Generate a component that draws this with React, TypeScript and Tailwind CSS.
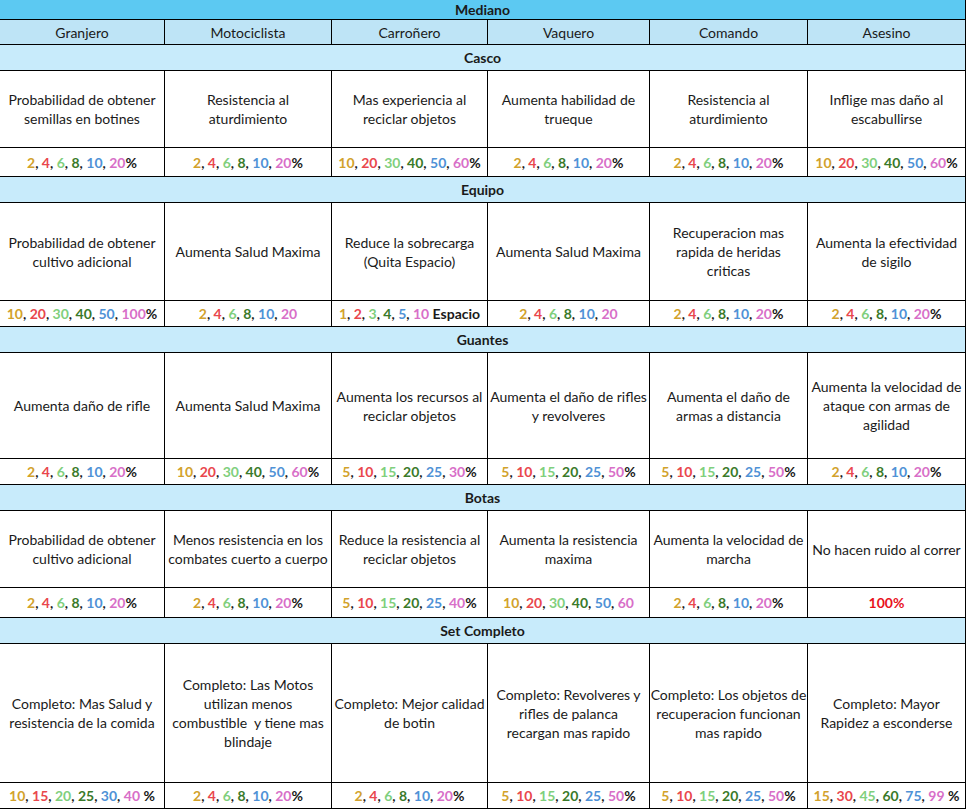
import React from "react";

const COLS = ["Granjero", "Motociclista", "Carroñero", "Vaquero", "Comando", "Asesino"];
const COLORS = [
  "text-[#d2a22c]",
  "text-[#e9474d]",
  "text-[#80cf7d]",
  "text-[#3a7a2a]",
  "text-[#4f92d6]",
  "text-[#d86fc8]",
];
const GRID = "grid grid-cols-[165px_167px_156px_162px_158px_158px]";

type Val = { n?: number[]; s?: string; red?: string };
type Section = { title: string; dh: string; vh: string; desc: string[][]; vals: Val[] };

const A = [2, 4, 6, 8, 10, 20];
const B = [10, 20, 30, 40, 50, 60];
const F = [5, 10, 15, 20, 25, 50];

const SECTIONS: Section[] = [
  {
    title: "Casco",
    dh: "h-[77px]",
    vh: "h-[29px]",
    desc: [
      ["Probabilidad de obtener", "semillas en botines"],
      ["Resistencia al", "aturdimiento"],
      ["Mas experiencia al", "reciclar objetos"],
      ["Aumenta habilidad de", "trueque"],
      ["Resistencia al", "aturdimiento"],
      ["Inflige mas daño al", "escabullirse"],
    ],
    vals: [
      { n: A, s: "%" },
      { n: A, s: "%" },
      { n: B, s: "%" },
      { n: A, s: "%" },
      { n: A, s: "%" },
      { n: B, s: "%" },
    ],
  },
  {
    title: "Equipo",
    dh: "h-[98px]",
    vh: "h-[26px]",
    desc: [
      ["Probabilidad de obtener", "cultivo adicional"],
      ["Aumenta Salud Maxima"],
      ["Reduce la sobrecarga", "(Quita Espacio)"],
      ["Aumenta Salud Maxima"],
      ["Recuperacion mas", "rapida de heridas", "criticas"],
      ["Aumenta la efectividad", "de sigilo"],
    ],
    vals: [
      { n: [10, 20, 30, 40, 50, 100], s: "%" },
      { n: A, s: "" },
      { n: [1, 2, 3, 4, 5, 10], s: " Espacio" },
      { n: A, s: "" },
      { n: A, s: "%" },
      { n: A, s: "%" },
    ],
  },
  {
    title: "Guantes",
    dh: "h-[106px]",
    vh: "h-[26px]",
    desc: [
      ["Aumenta daño de rifle"],
      ["Aumenta Salud Maxima"],
      ["Aumenta los recursos al", "reciclar objetos"],
      ["Aumenta el daño de rifles", "y revolveres"],
      ["Aumenta el daño de", "armas a distancia"],
      ["Aumenta la velocidad de", "ataque con armas de", "agilidad"],
    ],
    vals: [
      { n: A, s: "%" },
      { n: B, s: "%" },
      { n: [5, 10, 15, 20, 25, 30], s: "%" },
      { n: F, s: "%" },
      { n: F, s: "%" },
      { n: A, s: "%" },
    ],
  },
  {
    title: "Botas",
    dh: "h-[77px]",
    vh: "h-[30px]",
    desc: [
      ["Probabilidad de obtener", "cultivo adicional"],
      ["Menos resistencia en los", "combates cuerto a cuerpo"],
      ["Reduce la resistencia al", "reciclar objetos"],
      ["Aumenta la resistencia", "maxima"],
      ["Aumenta la velocidad de", "marcha"],
      ["No hacen ruido al correr"],
    ],
    vals: [
      { n: A, s: "%" },
      { n: A, s: "%" },
      { n: [5, 10, 15, 20, 25, 40], s: "%" },
      { n: B, s: "" },
      { n: A, s: "%" },
      { red: "100%" },
    ],
  },
  {
    title: "Set Completo",
    dh: "h-[139px]",
    vh: "h-[26px]",
    desc: [
      ["Completo: Mas Salud y", "resistencia de la comida"],
      ["Completo: Las Motos", "utilizan menos", "combustible\u00a0 y tiene mas", "blindaje"],
      ["Completo: Mejor calidad", "de botin"],
      ["Completo: Revolveres y", "rifles de palanca", "recargan mas rapido"],
      ["Completo: Los objetos de", "recuperacion funcionan", "mas rapido"],
      ["Completo: Mayor", "Rapidez a esconderse"],
    ],
    vals: [
      { n: [10, 15, 20, 25, 30, 40], s: " %" },
      { n: A, s: "%" },
      { n: A, s: "%" },
      { n: F, s: "%" },
      { n: F, s: "%" },
      { n: [15, 30, 45, 60, 75, 99], s: " %" },
    ],
  },
];

function Values({ v }: { v: Val }) {
  if (v.red) return <span className="text-[#e8121c]">{v.red}</span>;
  const n = v.n || [];
  return (
    <span className="whitespace-nowrap">
      {n.map((x, i) => (
        <React.Fragment key={i}>
          <span className={COLORS[i]}>{x}</span>
          {i < n.length - 1 ? <span>, </span> : null}
        </React.Fragment>
      ))}
      <span className="whitespace-pre">{v.s}</span>
    </span>
  );
}

export default function App() {
  return (
    <div
      className="w-[967px] h-[811px] bg-white text-[#1a1a1a] text-[14px] leading-[19px]"
      style={{ fontFamily: "Lato, 'Noto Sans', sans-serif" }}
    >
      <div className="w-[966px]">
        <div className="h-[20px] bg-[#5cc9f2] border-b border-r border-black flex items-center justify-center font-bold">
          Mediano
        </div>
        <div className={`${GRID} h-[25px] bg-[#bee4f6]`}>
          {COLS.map((c) => (
            <div key={c} className="border-r border-b border-black flex items-center justify-center">
              {c}
            </div>
          ))}
        </div>
        {SECTIONS.map((sec) => (
          <div key={sec.title}>
            <div className="h-[26px] bg-[#c8ebfb] border-b border-r border-black flex items-center justify-center font-bold">
              {sec.title}
            </div>
            <div className={`${GRID} ${sec.dh}`}>
              {sec.desc.map((lines, i) => (
                <div
                  key={i}
                  className="border-r border-b border-black flex flex-col items-center justify-center text-center"
                >
                  {lines.map((l, j) => (
                    <div key={j} className="whitespace-nowrap">
                      {l}
                    </div>
                  ))}
                </div>
              ))}
            </div>
            <div className={`${GRID} ${sec.vh}`}>
              {sec.vals.map((v, i) => (
                <div
                  key={i}
                  className="border-r border-b border-black flex items-center justify-center font-bold"
                >
                  <Values v={v} />
                </div>
              ))}
            </div>
          </div>
        ))}
      </div>
    </div>
  );
}
